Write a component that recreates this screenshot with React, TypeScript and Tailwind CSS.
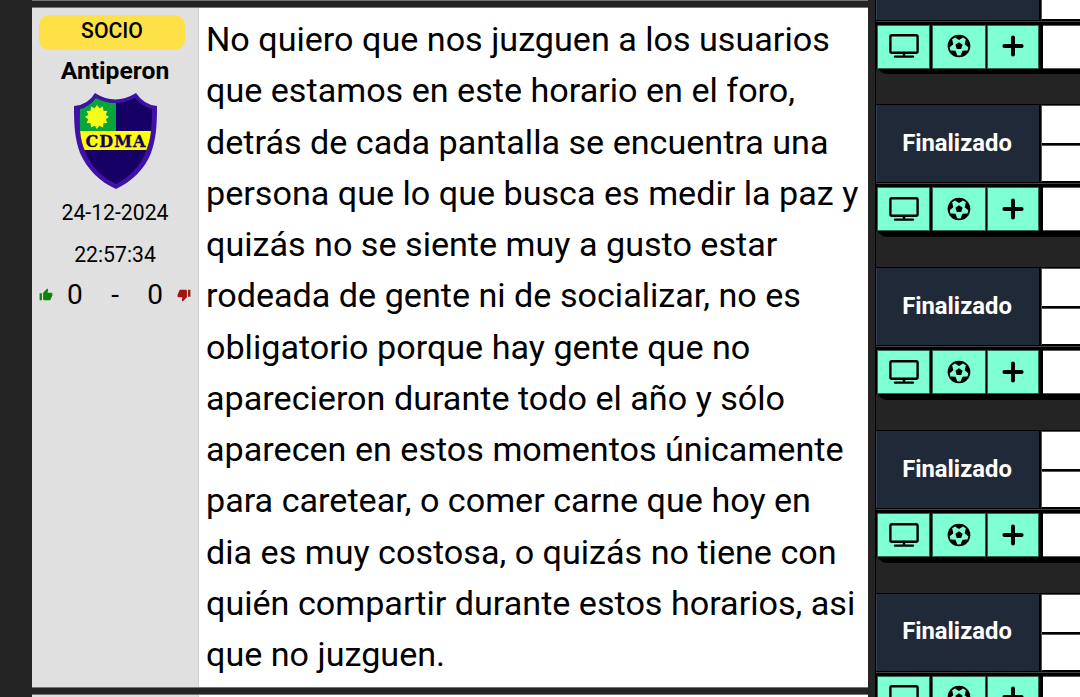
import React from "react";
import { MdThumbDown, MdThumbUp } from "react-icons/md";

const lines: string[] = [
  "No quiero que nos juzguen a los usuarios",
  "que estamos en este horario en el foro,",
  "detrás de cada pantalla se encuentra una",
  "persona que lo que busca es medir la paz y",
  "quizás no se siente muy a gusto estar",
  "rodeada de gente ni de socializar, no es",
  "obligatorio porque hay gente que no",
  "aparecieron durante todo el año y sólo",
  "aparecen en estos momentos únicamente",
  "para caretear, o comer carne que hoy en",
  "dia es muy costosa, o quizás no tiene con",
  "quién compartir durante estos horarios, asi",
  "que no juzguen.",
];

const sunPoints = Array.from({ length: 24 }, (_, i) => {
  const radius = i % 2 ? 9 : 12;
  const angle = (i * Math.PI) / 12;
  return `${23 + radius * Math.sin(angle)},${24 - radius * Math.cos(angle)}`;
}).join(" ");

function Crest() {
  return (
    <svg viewBox="0 0 84 96" className="h-24 w-[84px]">
      <defs>
        <clipPath id="shield">
          <path d="M22 5Q41 15 61 5Q69 14 78 16C78 34 77 46 72 58C66 74 55 84 42 91C28 84 17 74 11 58C6 46 5 34 6 16Q15 14 22 5Z" />
        </clipPath>
      </defs>
      <path
        d="M21 0Q41 13 62 0Q70 12 83 13C83 34 82 46 77 60C71 76 57 89 42 96C26 89 13 76 6 60C1 46 0 34 0 13Q14 12 21 0Z"
        fill="#3d12a5"
      />
      <g clipPath="url(#shield)">
        <path d="M0 0H84V96H0Z" fill="#160065" />
        <path d="M0 0H42V39H0Z" fill="#08a43d" />
        <path d="M0 38H84V57H0Z" fill="#ffff00" />
      </g>
      <polygon points={sunPoints} fill="#f7fc18" />
      <text
        x="11.5"
        y="54"
        textLength="60"
        className="font-['DejaVu_Serif',serif] text-[16px] font-bold"
        fill="#160065"
        stroke="#160065"
        strokeWidth="0.3"
      >
        CDMA
      </text>
    </svg>
  );
}

function Monitor() {
  return (
    <svg viewBox="0 0 30 24" className="h-6 w-[30px]" fill="none" stroke="black" strokeWidth="2.4">
      <rect x="1.4" y="1.2" width="27.2" height="17.6" rx="1.5" />
      <path d="M15 19V22M6 22.6H24" strokeLinecap="round" />
    </svg>
  );
}

function Football() {
  return (
    <svg viewBox="-12 -12 24 24" className="size-6">
      <circle r="10.4" fill="none" stroke="black" strokeWidth="1.9" />
      <path d="M0 -3.8L3.6 -1.2L2.2 3.1H-2.2L-3.6 -1.2Z" />
      {[0, 72, 144, 216, 288].map((angle) => (
        <path
          key={angle}
          transform={`rotate(${angle})`}
          d="M-4.3 -10.4L-3.6 -8.2L0 -6L3.6 -8.2L4.3 -10.4Z"
        />
      ))}
    </svg>
  );
}

function Plus() {
  return (
    <svg viewBox="0 0 22 22" className="size-[22px]" stroke="black" strokeWidth="4" strokeLinecap="round">
      <path d="M11 2.4V19.6M2.4 11H19.6" />
    </svg>
  );
}

function Match({ status }: { status?: string }) {
  return (
    <section className="h-[162.8px] shrink-0">
      <div className="h-[132.5px] rounded-bl-[12px] bg-black">
        <div className="flex h-[78px] border-t border-black">
          <div className="flex w-[163px] shrink-0 items-center justify-center border-l border-[#344050] bg-[#202938] pr-[2px] text-[23.8px] font-bold text-white">
            {status}
          </div>
          <div className="ml-[2px] flex flex-1 flex-col border-l border-[#555]">
            <div className="h-[38px] border-t border-[#555] bg-white" />
            <div className="mt-[2px] h-[36px] border-t border-[#555] bg-white" />
          </div>
        </div>
        <div className="h-[5px] bg-black pt-px">
          <div className="h-px bg-[#444]" />
        </div>
        <div className="flex h-[44px] bg-black pl-px">
          <div className="grid w-[162px] shrink-0 grid-cols-[53px_54px_52px] gap-[1.5px]">
            <div className="flex items-center justify-center border border-[#31614f] bg-[#7fffd4] pb-px">
              <Monitor />
            </div>
            <div className="flex items-center justify-center border border-[#31614f] bg-[#7fffd4] pb-px">
              <Football />
            </div>
            <div className="flex items-center justify-center border border-[#31614f] bg-[#7fffd4] pb-px">
              <Plus />
            </div>
          </div>
          <div className="ml-[4px] flex-1 border-y border-[#555] bg-white" />
        </div>
      </div>
    </section>
  );
}

export default function App() {
  return (
    <main className="flex h-[697px] w-[1080px] overflow-hidden bg-[#242424] pl-8 font-['Roboto',sans-serif] text-black">
      <div className="flex w-[836px] shrink-0 flex-col">
        <div className="h-px bg-[#747574]" />
        <article className="mt-1.5 flex h-[681px] border-y border-[#747574]">
          <aside className="flex w-[167px] shrink-0 flex-col items-center border-r border-[#d0d0d0] bg-[#e0e0e0]">
            <div className="mt-[7px] mr-[6px] flex h-[35px] w-[146px] items-center justify-center rounded-[10px] bg-[#fee047] pb-[3px] text-[21.2px] font-medium">
              SOCIO
            </div>
            <div className="mt-[5px] h-8 text-[24.7px] leading-8 font-bold">Antiperon</div>
            <div className="mt-[6px] ml-[2px] h-24">
              <Crest />
            </div>
            <div className="mt-[3px] text-center text-[21.2px] leading-[42px]">
              <div>24-12-2024</div>
              <div>22:57:34</div>
            </div>
            <div className="mt-px flex h-9 w-full items-center px-[7px] text-[28px]">
              <MdThumbUp className="size-[14px] text-[#08850a]" />
              <span className="flex flex-1 justify-between px-[14px]">
                <span>0</span>
                <span>-</span>
                <span>0</span>
              </span>
              <MdThumbDown className="size-[14px] text-[#a41212]" />
            </div>
          </aside>
          <div className="flex-1 bg-white pt-[6px] pl-[7px] text-[34.14px] leading-[51.25px] whitespace-nowrap">
            {lines.map((text) => (
              <div key={text}>{text}</div>
            ))}
          </div>
        </article>
        <div className="mt-1.5 flex flex-1 border-t border-[#747574] bg-white">
          <div className="w-[167px] border-r border-[#d0d0d0] bg-[#e0e0e0]" />
        </div>
      </div>
      <div className="ml-[7px] flex flex-1 flex-col border-l border-black">
        <div className="-mt-[58.4px] flex flex-col">
          <Match />
          <Match status="Finalizado" />
          <Match status="Finalizado" />
          <Match status="Finalizado" />
          <Match status="Finalizado" />
        </div>
      </div>
    </main>
  );
}
